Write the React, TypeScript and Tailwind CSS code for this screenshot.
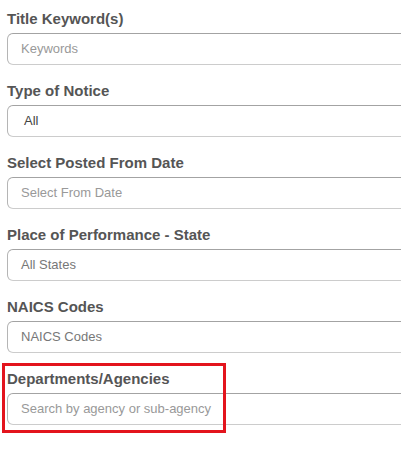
import React from "react";

type Field = {
  label: string;
  text: string;
  color: string;
  pl: string;
  highlight?: boolean;
};

const fields: Field[] = [
  { label: "Title Keyword(s)", text: "Keywords", color: "text-[#999999]", pl: "pl-[13px]" },
  { label: "Type of Notice", text: "All", color: "text-[#444444]", pl: "pl-[16px]" },
  { label: "Select Posted From Date", text: "Select From Date", color: "text-[#999999]", pl: "pl-[13px]" },
  { label: "Place of Performance - State", text: "All States", color: "text-[#777777]", pl: "pl-[13px]" },
  { label: "NAICS Codes", text: "NAICS Codes", color: "text-[#777777]", pl: "pl-[13px]" },
  { label: "Departments/Agencies", text: "Search by agency or sub-agency", color: "text-[#999999]", pl: "pl-[13px]", highlight: true },
];

export default function App() {
  return (
    <div
      className="w-[401px] h-[456px] overflow-hidden bg-white pt-[10px] pl-[7px]"
      style={{ fontFamily: '"Liberation Sans", Arial, sans-serif' }}
    >
      {fields.map((f) => (
        <div key={f.label} className="relative mb-[17px]">
          <div className="text-[15px] leading-[18px] font-bold text-[#555555] mb-[5px] whitespace-nowrap">
            {f.label}
          </div>
          <div
            className={`w-[430px] h-[32px] flex items-center border border-t-[#a3a3a3] border-l-[#b5b5b5] border-r-[#c8c8c8] border-b-[#cccccc] rounded-l-[6px] bg-white text-[13px] ${f.pl} ${f.color}`}
          >
            {f.text}
          </div>
          {f.highlight && (
            <div className="absolute left-[-5px] top-[-7px] w-[224px] h-[70px] border-[3px] border-[#e3141d] pointer-events-none" />
          )}
        </div>
      ))}
    </div>
  );
}
